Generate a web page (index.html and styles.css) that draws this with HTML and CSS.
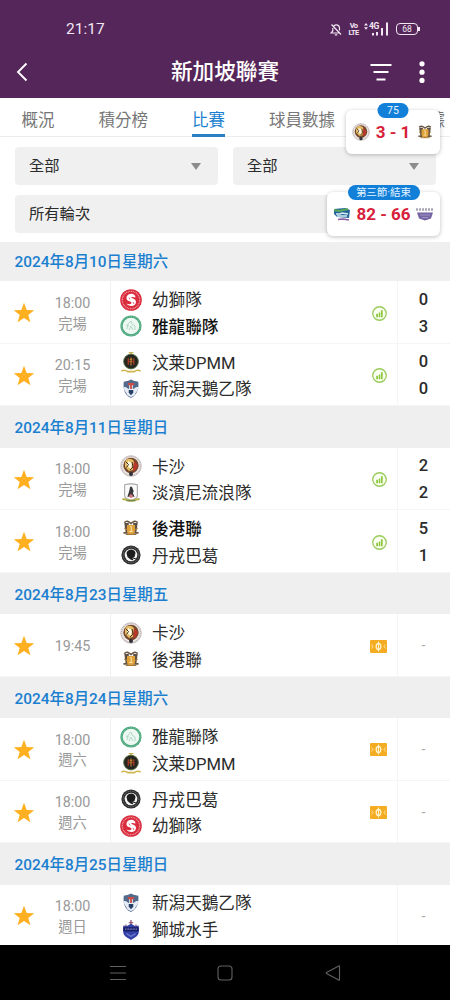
FILE: index.html
```
<!DOCTYPE html>
<html lang="zh-Hant">

<head>
    <meta charset="UTF-8">
    <meta name="viewport" content="width=device-width, initial-scale=1.0">
    <title>新加坡聯賽</title>
    <link rel="stylesheet" href="styles.css">
</head>

<body>
    <!-- shared icons -->
    <svg class="sprite">
        <symbol id="star" viewBox="0 0 22 22">
            <path fill="#ffb020" d="M11 .8l2.7 7.1 7.5.3-5.9 4.7 2.1 7.4L11 16.1l-6.4 4.2 2.1-7.4L.8 8.2l7.5-.3z" />
        </symbol>
        <symbol id="stats" viewBox="0 0 16 16">
            <circle cx="8" cy="8" r="7.200" fill="#fbfff2" stroke="#9acb5c" stroke-width="1.400" />
            <path fill="#8cc63f" d="M4.500 8.300h1.900v3.600H4.500zM7.200 7h1.600v4.900H7.200zM9.500 4.500h1.900v7.400H9.500z" />
        </symbol>
        <symbol id="pitch" viewBox="0 0 17 13">
            <rect width="17" height="13" rx="1" fill="#f4ad22" />
            <ellipse cx="8.5" cy="6.5" rx="2.3" ry="3" fill="none" stroke="#fff4cf" stroke-width="1.3" />
            <path d="M8.5 1.500v10" fill="none" stroke="#fff4cf" stroke-width="1" />
            <path d="M1.500 4.500l1.500 2-1.500 2M15.500 4.500l-1.500 2 1.500 2" fill="none" stroke="#ffe5a3" stroke-width="1" />
        </symbol>
        <symbol id="lions" viewBox="0 0 22 22">
            <circle cx="11" cy="11" r="10.8" fill="#d92c3c" />
            <circle cx="11" cy="11" r="8.7" fill="none" stroke="#f09aa2" stroke-width="1.3" stroke-dasharray="1 .7" />
            <path fill="#fff" d="M7 7c2-3 6-3 8-.5l.5 2-2-.3c-1.500-.6-2.500 0-2 .8 2 .8 4.500 1.400 4.500 4 0 2.500-2.300 4-4.600 4-2 0-4.300-.9-4.900-2.400 2.200 1 5 .7 5-.9-.2-1.500-3.500-1-4.700-3.200-.5-1.400-.3-2.500.2-3.500z" />
            <path d="M9 8.500l1 2M13 13l1 2" stroke="#d92c3c" stroke-width=".7" />
        </symbol>
        <symbol id="eagles" viewBox="0 0 22 22">
            <circle cx="11" cy="11" r="10.6" fill="#49a77b" />
            <circle cx="11" cy="11" r="8.3" fill="#eef8f3" />
            <circle cx="11" cy="11" r="9.4" fill="none" stroke="#8fccae" stroke-width=".8" stroke-dasharray="1 1" />
            <path d="M7 14l1-5 3-3 1 3 3 2v4M9 15l2-4 2 4M6 10l3 1" fill="none" stroke="#a9d6be" stroke-width=".9" />
        </symbol>
        <symbol id="dpmm" viewBox="0 0 22 24">
            <path d="M11 1v4M8.5 1.8h5M9 4h4" stroke="#c5ad50" stroke-width="1.5" />
            <circle cx="11" cy="11.5" r="8" fill="#252521" stroke="#526d3d" stroke-width="1" />
            <path d="M8 8v7M14 8v7M8 11.5h6" stroke="#a43b21" stroke-width="1.5" />
            <path d="M11 7v9M9.5 9h3" stroke="#d89837" stroke-width="1" />
            <path d="M.5 22c3-2 5-1 7 .5h7c2-1.500 4-2.500 7-.5" fill="none" stroke="#d0b44c" stroke-width="1.800" />
        </symbol>
        <symbol id="niigata" viewBox="0 0 18 22">
            <path fill="#526b8d" d="M1 3l5-1 3-1.500L12 2l5 1c.8 8-1 14-8 18C1 17 .4 10 1 3z" />
            <path fill="#e7edf5" d="M1 9c3-1 4 2 6 2V5h4v6c2 0 3-3 6-2-.5 5-3 5-4 9l-4 2-4-2C4 14 1.500 14 1 9z" />
            <path fill="#283f68" d="M6.500 12h5v3L9 18l-2.500-3z" />
            <path fill="#cb4e44" d="M5.500 4.500h7V7H10v4H8V7H5.500z" />
        </symbol>
        <symbol id="kasha" viewBox="0 0 22 22">
            <circle cx="11" cy="11" r="10.3" fill="#eee8e5" stroke="#cbc0c2" />
            <circle cx="11" cy="11" r="9.3" fill="none" stroke="#b3a6a8" stroke-width="1" stroke-dasharray="1 1" />
            <circle cx="11" cy="10.5" r="7.700" fill="#73472d" />
            <path fill="#e5bd63" d="M5 6c3-4 9-2 9 1l-1 8-4 1-4-4z" />
            <path fill="#fff8df" d="M8 6l4 2-1 6-4-3z" />
            <path fill="#b8382b" d="M14 6l4 4-2 5-3 1z" />
            <path fill="none" stroke="#3c2c25" stroke-width="1" d="M5.500 6.500l3 3-2 3M12 7l1 5-3 3" />
            <circle cx="11" cy="19" r="2" fill="#303038" />
        </symbol>
        <symbol id="tampines" viewBox="0 0 20 22">
            <path fill="#fafafa" stroke="#a7a7aa" stroke-width="1.2" d="M3 2q7-2 14 0v12c0 3-4 4-7 5-3-1-7-2-7-5z" />
            <path fill="#38383c" d="M9 4h2l2 5-1 2 2 4H6l2-6z" />
            <circle cx="10" cy="14.500" r="2" fill="#d2787c" />
            <path d="M.5 18c4-1 5 1.500 9.500 1.500s5.500-2.500 9.500-1.500" fill="none" stroke="#b6ae47" stroke-width="2.200" />
            <path d="M5 19.500h10" stroke="#638449" stroke-width="1.200" />
        </symbol>
        <symbol id="hougang" viewBox="0 0 18 18">
            <path d="M1.500 3c3-3 5-1 7.500 1 2.500-2 4.500-4 7.500-1M.5 14.500h17" fill="none" stroke="#6b5844" stroke-width="1.800" />
            <path fill="#5d5044" d="M1.500 3.500h5V14H3zM11.500 3.500h5L15 14h-3.500z" />
            <path fill="#e0a03a" d="M4.500 5.500h9V13c0 2-2.500 3-4.500 4-2-1-4.500-2-4.500-4z" />
            <path d="M8 7.500h1.300v5M7 13h4" fill="none" stroke="#fff0b9" stroke-width="1" />
            <path d="M1.500 9l3 2M16.500 9l-3 2M3 16.300h12" stroke="#a47739" stroke-width="1.200" />
        </symbol>
        <symbol id="tanjong" viewBox="0 0 20 20">
            <circle cx="10" cy="10" r="9.6" fill="#2c2c2c" />
            <circle cx="10" cy="10" r="7.9" fill="none" stroke="#777" stroke-width="1" stroke-dasharray="1 .8" />
            <circle cx="10" cy="10" r="6.3" fill="#f3f3f3" />
            <path fill="#1d1d1d" d="M5.500 8c2-5 8.500-4 9 0l-1 4-2 1 1 2.500-3-1-3-2.500z" />
            <path stroke="#1d1d1d" d="M12 13l3 1" />
        </symbol>
        <symbol id="sailors" viewBox="0 0 18 22">
            <path d="M9 0v6M6.500 3h5M3.500 5v3M14.500 5v3" stroke="#874461" stroke-width="1.3" />
            <path fill="#3340a6" d="M.5 6l3.500 1 5-3 5 3 3.500-1v8c-1 4-4 5-8.500 8-4.500-3-7.500-4-8.500-8z" />
            <path fill="#171d63" d="M.5 8h17v4.500H.5z" />
            <path d="M2.500 10h13" stroke="#8f97cf" stroke-width="1.3" stroke-dasharray="1 .7" />
            <path d="M4 15l5 3 5-3" fill="none" stroke="#6977ca" stroke-width="1.5" />
        </symbol>
    </svg>

    <div class="phone">
        <header>
            <div class="status-bar">
                <span class="clock">21:17</span>
                <svg class="bell" viewBox="0 0 12 13" fill="none" stroke="#f2e6f2" stroke-width="1.2">
                    <path d="M3.800 3C6.500.5 9.500 2.500 9.500 5v2.500M2.800 5v3L1 10h8M4.800 11.800h2.500M1.500 1.500l9.500 10" />
                </svg>
                <span class="volte">Vo<br>LTE</span>
                <div class="signal">
                    <svg viewBox="0 0 25 14" fill="#f2e6f2">
                        <path d="M2 1L4 3.600H0zM2 7.800L0 5.200h4zM8 11h2v2.500H8zM12 10h2v3.500h-2zM17 6h2v7.500h-2zM22 .5h2v13h-2z" />
                    </svg>
                    <span>4G</span>
                </div>
                <div class="battery">68</div>
            </div>
            <div class="title-bar">
                <svg class="back" viewBox="0 0 12 20"><path d="M10.500 1.500L2 10l8.500 8.500" fill="none" stroke="#fff" stroke-width="1.9" /></svg>
                <h1>新加坡聯賽</h1>
                <svg class="filter" viewBox="0 0 22 18"><path d="M.5 2h21M3.500 9h15M6.500 16.500h9" stroke="#fff" stroke-width="1.8" /></svg>
                <svg class="more" viewBox="0 0 6 22" fill="#fff"><circle cx="3" cy="2.8" r="2.6" /><circle cx="3" cy="11.2" r="2.6" /><circle cx="3" cy="19.4" r="2.6" /></svg>
            </div>
        </header>

        <nav>
            <a>概況</a>
            <a>積分榜</a>
            <a class="active">比賽</a>
            <a>球員數據</a>
            <a>球隊數據</a>
        </nav>

        <div class="filters">
            <div class="select">全部</div>
            <div class="select">全部</div>
            <div class="select wide">所有輪次</div>
        </div>

        <main>
            <h2 class="first">2024年8月10日星期六</h2>
            <div class="match">
                <svg class="star"><use href="#star" /></svg>
                <div class="time">18:00<br>完場</div>
                <div class="teams">
                    <div class="team"><svg><use href="#lions" /></svg>幼獅隊</div>
                    <div class="team win"><svg><use href="#eagles" /></svg>雅龍聯隊</div>
                </div>
                <svg class="stats"><use href="#stats" /></svg>
                <div class="score">0<br>3</div>
            </div>
            <div class="match">
                <svg class="star"><use href="#star" /></svg>
                <div class="time">20:15<br>完場</div>
                <div class="teams">
                    <div class="team"><svg><use href="#dpmm" /></svg>汶莱DPMM</div>
                    <div class="team"><svg class="small"><use href="#niigata" /></svg>新潟天鵝乙隊</div>
                </div>
                <svg class="stats"><use href="#stats" /></svg>
                <div class="score">0<br>0</div>
            </div>

            <h2>2024年8月11日星期日</h2>
            <div class="match">
                <svg class="star"><use href="#star" /></svg>
                <div class="time">18:00<br>完場</div>
                <div class="teams">
                    <div class="team"><svg><use href="#kasha" /></svg>卡沙</div>
                    <div class="team"><svg class="small"><use href="#tampines" /></svg>淡濱尼流浪隊</div>
                </div>
                <svg class="stats"><use href="#stats" /></svg>
                <div class="score">2<br>2</div>
            </div>
            <div class="match">
                <svg class="star"><use href="#star" /></svg>
                <div class="time">18:00<br>完場</div>
                <div class="teams">
                    <div class="team win"><svg class="tiny"><use href="#hougang" /></svg>後港聯</div>
                    <div class="team"><svg class="small"><use href="#tanjong" /></svg>丹戎巴葛</div>
                </div>
                <svg class="stats"><use href="#stats" /></svg>
                <div class="score">5<br>1</div>
            </div>

            <h2>2024年8月23日星期五</h2>
            <div class="match">
                <svg class="star"><use href="#star" /></svg>
                <div class="time">19:45</div>
                <div class="teams">
                    <div class="team"><svg><use href="#kasha" /></svg>卡沙</div>
                    <div class="team"><svg class="tiny"><use href="#hougang" /></svg>後港聯</div>
                </div>
                <svg class="pitch"><use href="#pitch" /></svg>
                <div class="score none">-</div>
            </div>

            <h2>2024年8月24日星期六</h2>
            <div class="match">
                <svg class="star"><use href="#star" /></svg>
                <div class="time">18:00<br>週六</div>
                <div class="teams">
                    <div class="team"><svg><use href="#eagles" /></svg>雅龍聯隊</div>
                    <div class="team"><svg><use href="#dpmm" /></svg>汶莱DPMM</div>
                </div>
                <svg class="pitch"><use href="#pitch" /></svg>
                <div class="score none">-</div>
            </div>
            <div class="match">
                <svg class="star"><use href="#star" /></svg>
                <div class="time">18:00<br>週六</div>
                <div class="teams">
                    <div class="team"><svg class="small"><use href="#tanjong" /></svg>丹戎巴葛</div>
                    <div class="team"><svg><use href="#lions" /></svg>幼獅隊</div>
                </div>
                <svg class="pitch"><use href="#pitch" /></svg>
                <div class="score none">-</div>
            </div>

            <h2>2024年8月25日星期日</h2>
            <div class="match">
                <svg class="star"><use href="#star" /></svg>
                <div class="time">18:00<br>週日</div>
                <div class="teams">
                    <div class="team"><svg class="small"><use href="#niigata" /></svg>新潟天鵝乙隊</div>
                    <div class="team"><svg class="small"><use href="#sailors" /></svg>獅城水手</div>
                </div>
                <div class="score none">-</div>
            </div>
        </main>

        <footer>
            <svg viewBox="0 0 16 16"><path d="M0 1.500h16M0 8h16M0 14.500h16" /></svg>
            <svg viewBox="0 0 16 16"><rect x="1" y="1" width="14" height="14" rx="3" /></svg>
            <svg viewBox="0 0 16 16"><path d="M14.500 1.200v13.600q0 .6-.7.200L1.500 8.500q-.6-.5 0-1L13.800 1q.7-.4.7.2z" /></svg>
        </footer>

        <!-- live scores on top of the page -->
        <div class="live football">
            <span class="badge">75</span>
            <svg class="home"><use href="#kasha" /></svg>
            <b>3 - 1</b>
            <svg class="away"><use href="#hougang" /></svg>
        </div>
        <div class="live basketball">
            <span class="badge">第三節·結束</span>
            <svg class="home" viewBox="0 0 18 14">
                <path fill="#28659b" d="M1 2l11-1 5 2-1 8-12-1-3-3z" />
                <path d="M1 3l5 1 9-2" fill="none" stroke="#58a957" stroke-width="1.8" />
                <path d="M3 7h4l2-1 6 1M4 9h10" fill="none" stroke="#d8f0f4" stroke-width="1.4" />
                <path d="M5 12.500l5-.5 6 1" fill="none" stroke="#8a5aa2" stroke-width="1.5" />
            </svg>
            <b>82 - 66</b>
            <svg class="away" viewBox="0 0 18 13">
                <path d="M0 2h18" stroke="#aaa4b5" stroke-width="2.5" stroke-dasharray="2 1" />
                <path fill="#7565a5" d="M1 5h16l-2 6-6 2-6-2z" />
                <path d="M4 7.500h10M6 10h6" stroke="#a195c2" stroke-width="1" />
            </svg>
        </div>
    </div>
</body>

</html>
```
FILE: styles.css
```
* {
    box-sizing: border-box;
}

body {
    margin: 0;
    background: #fff;
    font-family: Roboto, "Noto Sans CJK TC", sans-serif;
    color: #2b2b2b;
}

.sprite {
    display: none;
}

svg {
    display: block;
    flex: none;
}

.phone {
    position: relative;
    display: flex;
    flex-direction: column;
    width: 450px;
    height: 1000px;
    overflow: hidden;
}

header {
    height: 98px;
    flex: none;
    padding-top: 17px;
    background: #552659;
    color: #fff;
}

.status-bar {
    display: flex;
    align-items: center;
    height: 24px;
    padding: 0 29px 0 66px;
    color: #f2e6f2;
}

.clock {
    font-size: 15.5px;
    margin-right: auto;
}

.bell {
    width: 12px;
    height: 13px;
}

.volte {
    width: 11px;
    margin-left: 6px;
    font-size: 7.5px;
    line-height: 7px;
    font-weight: bold;
    letter-spacing: -0.7px;
    text-align: center;
    white-space: nowrap;
}

.signal {
    position: relative;
    width: 25px;
    height: 14px;
    margin-left: 5px;
}

.signal svg {
    width: 25px;
    height: 14px;
}

.signal span {
    position: absolute;
    left: 5px;
    top: 0;
    font-size: 8.5px;
    line-height: 9px;
    font-weight: bold;
    letter-spacing: -0.5px;
}

.battery {
    position: relative;
    width: 22px;
    height: 12px;
    margin: 0 3px 0 7px;
    border: 1px solid #f2e6f2;
    border-radius: 4px;
    font-size: 8.5px;
    line-height: 10.5px;
    text-align: center;
}

.battery::after {
    content: "";
    position: absolute;
    right: -3px;
    top: 3px;
    width: 2px;
    height: 4px;
    background: #f2e6f2;
}

.title-bar {
    display: flex;
    align-items: center;
    height: 62px;
    padding: 0 25px 0 16px;
}

.back {
    width: 12px;
    height: 20px;
}

.title-bar h1 {
    flex: 1;
    margin: 0;
    padding-left: 60px;
    font-size: 21.6px;
    font-weight: 500;
    line-height: 30px;
    text-align: center;
}

.filter {
    width: 22px;
    height: 18px;
    margin-left: 8px;
}

.more {
    width: 6px;
    height: 22px;
    margin-left: 27px;
}

nav {
    display: flex;
    flex: none;
    gap: 44px;
    height: 39px;
    padding-left: 21.5px;
    border-bottom: 1px solid #ededed;
    white-space: nowrap;
}

nav a {
    height: 39px;
    font-size: 16.5px;
    line-height: 45px;
    color: #777;
}

nav .active {
    color: #1b7fd0;
    border-bottom: 3px solid #2b7fc5;
}

.filters {
    display: grid;
    flex: none;
    grid-template-columns: 1fr 1fr;
    gap: 10px 15px;
    height: 105px;
    padding: 10px 14.5px 0;
    align-content: start;
}

.select {
    display: flex;
    align-items: center;
    justify-content: space-between;
    height: 38px;
    padding: 0 17px 0 14.5px;
    border-radius: 4px;
    background: #f0f0f0;
    font-size: 15.3px;
    line-height: 36px;
}

.select::after {
    content: "";
    border: 5.5px solid transparent;
    border-top: 7px solid #8c8c8c;
    border-bottom: 0;
}

.wide {
    grid-column: span 2;
}

main {
    height: 703px;
    overflow: hidden;
}

h2 {
    height: 41.3px;
    margin: 0;
    padding-left: 14.5px;
    background: #efefef;
    color: #1b7fd0;
    font-size: 15.4px;
    font-weight: 500;
    line-height: 44px;
}

h2.first {
    height: 39.3px;
    line-height: 40px;
}

.match {
    display: flex;
    align-items: center;
    height: 62.6px;
    border-bottom: 1px solid #f5f5f5;
}

.star {
    width: 22px;
    height: 22px;
    margin: 2px 0 0 13px;
}

.time {
    width: 75px;
    padding-top: 3px;
    color: #999;
    font-size: 14.3px;
    line-height: 20.8px;
    text-align: center;
}

.teams {
    flex: 1;
    align-self: stretch;
    padding: 6px 0 0 9px;
    border-left: 1px solid #f0f0f0;
}

.team {
    display: flex;
    align-items: center;
    height: 26.7px;
    font-size: 16.6px;
    line-height: 27px;
}

.team svg {
    width: 22px;
    height: 22px;
    margin: -2px 10px 0 0;
}

.team .small {
    width: 20px;
    height: 20px;
    margin: -2px 11px 0 1px;
}

.team .tiny {
    width: 16px;
    height: 16px;
    margin: -3px 13px 0 3px;
}

.win {
    font-weight: 500;
    color: #111;
}

.stats {
    width: 15px;
    height: 15px;
    margin: 2px 10px 0 0;
}

.pitch {
    width: 17px;
    height: 13px;
    margin: 2px 10px 0 0;
}

.score {
    align-self: stretch;
    width: 53px;
    padding: 5.5px 1px 0 0;
    border-left: 1px solid #f5f5f5;
    font-size: 16.5px;
    font-weight: 500;
    line-height: 26.7px;
    text-align: center;
}

.none {
    color: #aaa;
    font-size: 14px;
    font-weight: normal;
    padding-top: 18px;
}

footer {
    display: flex;
    align-items: center;
    justify-content: center;
    gap: 91.5px;
    flex: 1;
    background: #000;
}

footer svg {
    width: 16px;
    height: 16px;
    fill: none;
    stroke: #606060;
    stroke-width: 1.1;
}

.live {
    position: absolute;
    right: 10px;
    display: flex;
    align-items: center;
    justify-content: space-between;
    height: 44px;
    padding: 0 6px;
    border-radius: 6px;
    background: #fff;
    box-shadow: 0 1px 4px rgba(0, 0, 0, 0.25);
    color: #d71f3b;
    font-size: 17px;
}

.live b {
    font-weight: 700;
}

.football {
    top: 110px;
    width: 94px;
}

.basketball {
    top: 192px;
    width: 113px;
}

.badge {
    position: absolute;
    top: -7px;
    left: 50%;
    width: 31px;
    height: 15px;
    border-radius: 8px;
    background: #1280d8;
    color: #e6f4ff;
    font-size: 10.5px;
    line-height: 15px;
    text-align: center;
    transform: translateX(-50%);
}

.basketball .badge {
    width: 72px;
}

.live svg {
    width: 18px;
    height: 18px;
}

.live .away {
    height: 14px;
}
```
